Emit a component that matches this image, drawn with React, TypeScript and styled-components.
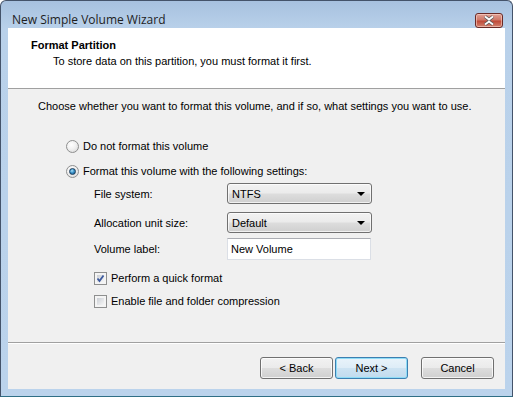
import React from "react";
import styled, { createGlobalStyle } from "styled-components";

const GlobalStyle = createGlobalStyle`
  html, body {
    margin: 0;
    padding: 0;
    background: #ffffff;
  }
  * {
    box-sizing: border-box;
  }
`;

const uiFont = `"Liberation Sans", Arial, sans-serif`;

const Window = styled.div`
  width: 513px;
  height: 397px;
  display: flex;
  flex-direction: column;
  border: 1px solid #44536a;
  border-bottom-color: #2f6f86;
  border-radius: 6px 6px 0 0;
  background: linear-gradient(#a7c1df 0px, #b9d1ea 28px, #bbd3ec 100%);
  overflow: hidden;
`;

const TitleBar = styled.div`
  height: 27px;
  flex: none;
  display: flex;
  align-items: center;
  justify-content: space-between;
  padding: 0 9px 0 11px;
`;

const Title = styled.span`
  font-family: "Open Sans", "Noto Sans", sans-serif;
  font-size: 12px;
  color: #1e1e1e;
  margin-top: 10px;
`;

const CloseButton = styled.div`
  width: 28px;
  height: 15px;
  margin-top: 11px;
  display: flex;
  align-items: center;
  justify-content: center;
  border: 1px solid #6a2a26;
  border-radius: 3px;
  background: linear-gradient(#e0a196 0%, #cf7868 45%, #c04a38 55%, #d1826f 100%);
  box-shadow: inset 0 0 0 1px rgba(255, 220, 210, 0.55);
`;

const Client = styled.div`
  flex: 1;
  margin: 0 7px 7px;
  display: flex;
  flex-direction: column;
  background: #f0f0f0;
  font-family: ${uiFont};
  font-size: 11px;
  color: #000000;
`;

const Header = styled.div`
  height: 61px;
  flex: none;
  background: #ffffff;
  border-bottom: 1px solid #a0a0a0;
  padding: 10px 0 0 23px;
`;

const HeaderTitle = styled.div`
  font-weight: bold;
  line-height: 14px;
`;

const HeaderText = styled.div`
  margin: 2px 0 0 22px;
  line-height: 14px;
`;

const Body = styled.div`
  flex: 1;
  padding: 10px 0 0 30px;
  display: flex;
  flex-direction: column;
`;

const Intro = styled.div`
  line-height: 14px;
`;

const Options = styled.div`
  margin: 27px 0 0 28px;
  display: flex;
  flex-direction: column;
  gap: 12px;
`;

const OptionRow = styled.label`
  display: flex;
  align-items: center;
  gap: 4px;
  line-height: 13px;
`;

const Radio = styled.span<{ $checked?: boolean }>`
  width: 13px;
  height: 13px;
  flex: none;
  border-radius: 50%;
  border: 1px solid #8e8f8f;
  background: radial-gradient(circle at 40% 35%, #ffffff 0%, #f1f1f1 45%, #d3d3d3 100%);
  display: flex;
  align-items: center;
  justify-content: center;

  &::after {
    content: "";
    display: ${(p) => (p.$checked ? "block" : "none")};
    width: 7px;
    height: 7px;
    border-radius: 50%;
    border: 1px solid #1b3d5c;
    background: radial-gradient(circle at 40% 35%, #a9e2fb 0%, #3c93c9 45%, #0f4f82 100%);
    box-sizing: border-box;
  }
`;

const Settings = styled.div`
  margin: 5px 0 0 56px;
  display: flex;
  flex-direction: column;
`;

const FieldRow = styled.div<{ $space: number }>`
  display: grid;
  grid-template-columns: 133px 145px;
  align-items: center;
  margin-top: ${(p) => p.$space}px;
`;

const FieldLabel = styled.span`
  line-height: 14px;
`;

const Combo = styled.div`
  height: 21px;
  display: flex;
  align-items: center;
  justify-content: space-between;
  padding: 0 6px 0 4px;
  border: 1px solid #707070;
  border-radius: 3px;
  background: linear-gradient(#f2f2f2 0%, #ebebeb 48%, #dddddd 52%, #cfcfcf 100%);
  box-shadow: inset 0 0 0 1px rgba(255, 255, 255, 0.7);
`;

const Arrow = styled.span`
  width: 0;
  height: 0;
  border-left: 4px solid transparent;
  border-right: 4px solid transparent;
  border-top: 4px solid #000000;
`;

const TextBox = styled.div`
  height: 22px;
  margin-right: 1px;
  display: flex;
  align-items: center;
  padding: 0 3px;
  background: #ffffff;
  border: 1px solid #dbdfe6;
  border-top-color: #abadb3;
`;

const Checks = styled.div`
  margin: 12px 0 0 56px;
  display: flex;
  flex-direction: column;
  gap: 10px;
`;

const CheckBox = styled.span`
  width: 13px;
  height: 13px;
  flex: none;
  border: 1px solid #8e8f8f;
  background: #f4f4f4;
  padding: 2px;
  display: flex;

  &::before {
    content: "";
    flex: 1;
    background: linear-gradient(135deg, #cbcfd5 0%, #f6f6f6 100%);
  }
`;

const CheckedBox = styled(CheckBox)`
  position: relative;
  & > svg {
    position: absolute;
    left: 1px;
    top: 1px;
  }
`;

const Footer = styled.div`
  height: 47px;
  flex: none;
  border-top: 1px solid #a0a0a0;
  box-shadow: inset 0 1px 0 #ffffff;
  display: flex;
  align-items: flex-start;
  padding: 14px 11px 0 0;
  justify-content: flex-end;
`;

const Button = styled.div<{ $default?: boolean; $gap?: number }>`
  width: 73px;
  height: 22px;
  margin-left: ${(p) => p.$gap ?? 0}px;
  display: flex;
  align-items: center;
  justify-content: center;
  border: 1px solid ${(p) => (p.$default ? "#3c7fb1" : "#707070")};
  border-radius: 3px;
  background: ${(p) =>
    p.$default
      ? "linear-gradient(#e9f3fa 0%, #deedf7 48%, #cde3f2 52%, #c1dbee 100%)"
      : "linear-gradient(#f2f2f2 0%, #ebebeb 48%, #dddddd 52%, #cfcfcf 100%)"};
  box-shadow: inset 0 0 0 1px ${(p) => (p.$default ? "#8fdcf6" : "rgba(255,255,255,0.75)")};
`;

export default function App() {
  return (
    <>
      <GlobalStyle />
      <Window>
        <TitleBar>
          <Title>New Simple Volume Wizard</Title>
          <CloseButton>
            <svg width="14" height="11" viewBox="0 0 14 11">
              <path
                d="M3 1.5 L7 4.5 L11 1.5 M3 9.5 L7 6.5 L11 9.5"
                stroke="#5a5a5a"
                strokeWidth="3.4"
                fill="none"
              />
              <path
                d="M3 1.5 L7 4.5 L11 1.5 M3 9.5 L7 6.5 L11 9.5"
                stroke="#ffffff"
                strokeWidth="1.8"
                fill="none"
              />
            </svg>
          </CloseButton>
        </TitleBar>
        <Client>
          <Header>
            <HeaderTitle>Format Partition</HeaderTitle>
            <HeaderText>To store data on this partition, you must format it first.</HeaderText>
          </Header>
          <Body>
            <Intro>
              Choose whether you want to format this volume, and if so, what settings you want to use.
            </Intro>
            <Options>
              <OptionRow>
                <Radio />
                Do not format this volume
              </OptionRow>
              <OptionRow>
                <Radio $checked />
                Format this volume with the following settings:
              </OptionRow>
            </Options>
            <Settings>
              <FieldRow $space={0}>
                <FieldLabel>File system:</FieldLabel>
                <Combo>
                  NTFS
                  <Arrow />
                </Combo>
              </FieldRow>
              <FieldRow $space={8}>
                <FieldLabel>Allocation unit size:</FieldLabel>
                <Combo>
                  Default
                  <Arrow />
                </Combo>
              </FieldRow>
              <FieldRow $space={5}>
                <FieldLabel>Volume label:</FieldLabel>
                <TextBox>New Volume</TextBox>
              </FieldRow>
            </Settings>
            <Checks>
              <OptionRow>
                <CheckedBox>
                  <svg width="9" height="9" viewBox="0 0 9 9">
                    <path d="M1.5 4.5 L3.5 7 L7.5 1.5" stroke="#3d5a9e" strokeWidth="1.8" fill="none" />
                  </svg>
                </CheckedBox>
                Perform a quick format
              </OptionRow>
              <OptionRow>
                <CheckBox />
                Enable file and folder compression
              </OptionRow>
            </Checks>
          </Body>
          <Footer>
            <Button>&lt; Back</Button>
            <Button $default $gap={2}>
              Next &gt;
            </Button>
            <Button $gap={13}>Cancel</Button>
          </Footer>
        </Client>
      </Window>
    </>
  );
}
